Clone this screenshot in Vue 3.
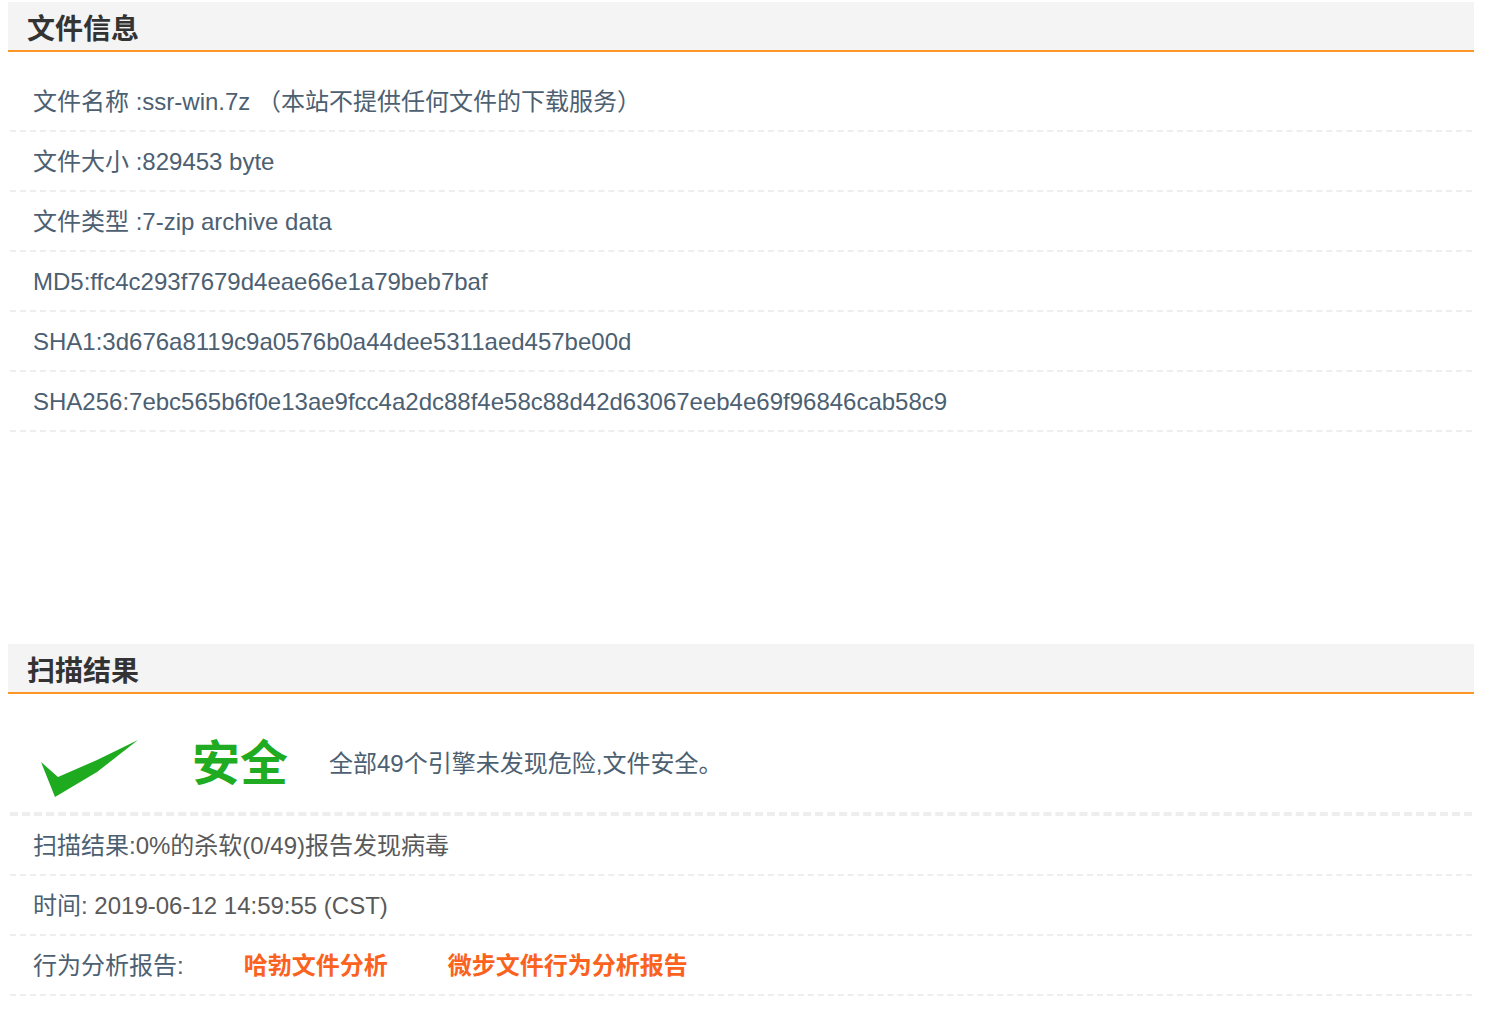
<script setup>
const fileRows = [
  { label: '文件名称 :', value: 'ssr-win.7z （本站不提供任何文件的下载服务）' },
  { label: '文件大小 :', value: '829453 byte' },
  { label: '文件类型 :', value: '7-zip archive data' },
  { label: 'MD5:', value: 'ffc4c293f7679d4eae66e1a79beb7baf' },
  { label: 'SHA1:', value: '3d676a8119c9a0576b0a44dee5311aed457be00d' },
  { label: 'SHA256:', value: '7ebc565b6f0e13ae9fcc4a2dc88f4e58c88d42d63067eeb4e69f96846cab58c9' }
]
</script>

<template>
  <div class="page">
    <section class="file-section">
      <h2 class="head">文件信息</h2>
      <ul class="list">
        <li v-for="r in fileRows" :key="r.label" class="row">{{ r.label }}{{ r.value }}</li>
      </ul>
    </section>

    <section class="scan-section">
      <h2 class="head">扫描结果</h2>
      <div class="hero">
        <svg class="check" width="100" height="60" viewBox="0 0 100 60">
          <path d="M2 22 L19 37 L58 20 L99 0 L58 32 L16 57 Z" fill="#1fab1f" />
        </svg>
        <strong class="safe">安全</strong>
        <span class="summary">全部49个引擎未发现危险,文件安全。</span>
      </div>
      <ul class="list">
        <li class="row">扫描结果:<span class="grey">0%的杀软(0/49)报告发现病毒</span></li>
        <li class="row">时间: <span class="grey">2019-06-12 14:59:55 (CST)</span></li>
        <li class="row">行为分析报告:<a class="link first">哈勃文件分析</a><a class="link second">微步文件行为分析报告</a></li>
      </ul>
    </section>
  </div>
</template>

<style scoped>
.page {
  width: 1466px;
  margin-left: 8px;
  padding-top: 2px;
  font-family: "Liberation Sans", "Noto Sans CJK SC", sans-serif;
  font-size: 24px;
  color: #4c6072;
}
.head {
  margin: 0;
  height: 50px;
  box-sizing: border-box;
  padding-left: 19px;
  background: #f4f4f4;
  border-bottom: 2px solid #fb9627;
  font-size: 28px;
  font-weight: 700;
  line-height: 56px;
  color: #333;
}
.list {
  list-style: none;
  margin: 0 2px;
  padding: 0;
}
.file-section .list {
  padding-top: 20px;
}
.scan-section {
  margin-top: 212px;
}
.row {
  height: 60px;
  box-sizing: border-box;
  padding-left: 23px;
  line-height: 60px;
  border-bottom: 2px dashed #eeeeee;
  white-space: nowrap;
}
.hero {
  display: flex;
  align-items: center;
  height: 122px;
  box-sizing: border-box;
  margin: 0 2px;
  padding-top: 16px;
  padding-left: 28px;
  border-bottom: 4px dashed #eeeeee;
}
.check {
  flex: none;
  margin-top: 17px;
  margin-left: 1px;
  filter: blur(0.6px);
}
.safe {
  margin-left: 53px;
  margin-top: 6px;
  font-size: 48px;
  line-height: 1;
  color: #1fab22;
}
.summary {
  margin-left: 41px;
}
.grey {
  color: #595959;
}
.link {
  font-weight: 700;
  color: #fb6220;
}
.first {
  margin-left: 60px;
}
.second {
  margin-left: 60px;
}
</style>
